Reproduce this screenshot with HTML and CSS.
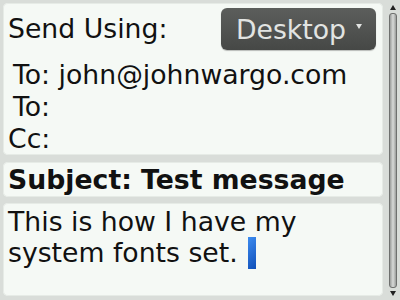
FILE: index.html
```html
<!DOCTYPE html>
<html lang="en">
<head>
  <meta charset="UTF-8">
  <title>Compose Message</title>
  <link rel="stylesheet" href="styles.css">
</head>
<body>
  <div class="screen">
    <div class="compose">
      <div class="panel header-panel">
        <div class="send-row">
          <span class="label">Send Using:</span>
          <button class="choice">Desktop <span class="arrow"></span></button>
        </div>
        <div class="addr to-first">To: john@johnwargo.com</div>
        <div class="addr">To:</div>
        <div class="addr cc">Cc:</div>
      </div>

      <div class="panel subject-panel">Subject: Test message</div>

      <div class="panel body-panel">
        This is how I have my system fonts set.<span class="cursor"></span>
      </div>
    </div>

    <div class="scrollbar">
      <span class="arrow-up"></span>
      <div class="track"></div>
      <span class="arrow-down"></span>
    </div>
  </div>
</body>
</html>
```

FILE: styles.css
```css
body {
  margin: 0;
  width: 400px;
  height: 300px;
  overflow: hidden;
  background: #d9ddd9;
  font-family: "DejaVu Sans", sans-serif;
  font-size: 26.7px;
  color: #111;
}

.screen {
  display: flex;
  height: 300px;
  padding: 3px 3px 4px 3px;
  box-sizing: border-box;
  gap: 6px;
}

.compose {
  flex: 1;
  display: flex;
  flex-direction: column;
}

.panel {
  background: #f5f9f5;
  border-radius: 5px;
  box-shadow: inset 0 0 0 1px #e6ebe6;
}

.header-panel {
  padding: 5px 6px 0 5px;
  height: 152px;
  box-sizing: border-box;
}

.send-row {
  display: flex;
  justify-content: space-between;
  align-items: center;
  line-height: 42px;
}

.choice {
  font-family: "DejaVu Sans", sans-serif;
  font-size: 26.7px;
  color: #e2e4e2;
  background: linear-gradient(#5c5e5c, #464846);
  border: none;
  border-radius: 6px;
  height: 42px;
  width: 155px;
  margin-right: 1px;
  padding: 0 0 0 15px;
  text-align: left;
  box-shadow: 0 1px 1px rgba(0, 0, 0, 0.25);
  display: flex;
  align-items: center;
  gap: 10px;
}

.arrow {
  width: 0;
  height: 0;
  border-left: 3px solid transparent;
  border-right: 3px solid transparent;
  border-top: 5px solid #e2e4e2;
  margin-top: -5px;
}

.addr {
  line-height: 32px;
  padding-left: 5px;
}

.to-first {
  margin-top: 9px;
}

.cc {
  padding-left: 0;
}

.subject-panel {
  font-weight: bold;
  height: 35px;
  line-height: 35px;
  margin-top: 7px;
  padding-left: 5px;
}

.body-panel {
  flex: 1;
  margin-top: 6px;
  padding: 3px 6px 0 5px;
  line-height: 31px;
}

.cursor {
  display: inline-block;
  width: 8px;
  height: 32px;
  margin-left: 10px;
  vertical-align: -7px;
  background: linear-gradient(135deg, #3d8cf0, #0f4fb8);
}

.scrollbar {
  width: 8px;
  display: flex;
  flex-direction: column;
  align-items: center;
  padding: 2px 0 0;
}

.arrow-up, .arrow-down {
  width: 0;
  height: 0;
  border-left: 3px solid transparent;
  border-right: 3px solid transparent;
}

.arrow-up {
  border-bottom: 5px solid #222;
}

.arrow-down {
  border-top: 5px solid #222;
}

.track {
  flex: 1;
  width: 6px;
  margin: 3px 0;
  border-radius: 3px;
  border: 1px solid #6e706e;
  background: linear-gradient(90deg, #9a9c9a, #d8dad8 50%, #9a9c9a);
}
```
